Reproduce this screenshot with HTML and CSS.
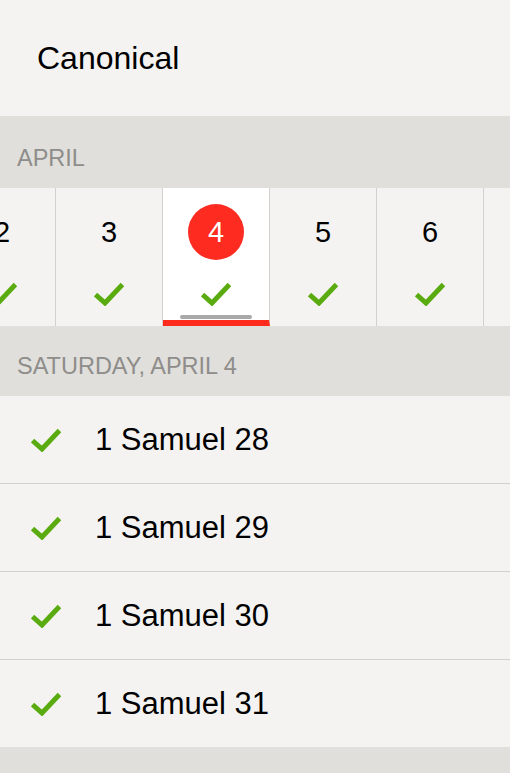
FILE: index.html
```html
<!DOCTYPE html>
<html lang="en">
<head>
    <meta charset="UTF-8">
    <meta name="viewport" content="width=device-width, initial-scale=1.0">
    <title>Canonical</title>
    <link rel="stylesheet" href="styles.css">
</head>
<body>
<div class="wrapper">
    <header class="topBar">
        <span class="planTitle">Canonical</span>
    </header>

    <div class="section section-month">APRIL</div>

    <div class="dayStrip">
        <div class="day">
            <span class="num">2</span>
            <svg class="check" viewBox="0 0 30 24"><polyline points="1.5,12.5 11,21 28.5,2.5"/></svg>
        </div>
        <div class="day">
            <span class="num">3</span>
            <svg class="check" viewBox="0 0 30 24"><polyline points="1.5,12.5 11,21 28.5,2.5"/></svg>
        </div>
        <div class="day current">
            <span class="num">4</span>
            <svg class="check" viewBox="0 0 30 24"><polyline points="1.5,12.5 11,21 28.5,2.5"/></svg>
            <span class="grip"></span>
        </div>
        <div class="day">
            <span class="num">5</span>
            <svg class="check" viewBox="0 0 30 24"><polyline points="1.5,12.5 11,21 28.5,2.5"/></svg>
        </div>
        <div class="day">
            <span class="num">6</span>
            <svg class="check" viewBox="0 0 30 24"><polyline points="1.5,12.5 11,21 28.5,2.5"/></svg>
        </div>
        <!-- 下一天，只露出一条边 -->
        <div class="day"></div>
    </div>

    <div class="section section-day">SATURDAY, APRIL 4</div>

    <ul class="readingList">
        <li>
            <svg class="check" viewBox="0 0 30 24"><polyline points="1.5,12.5 11,21 28.5,2.5"/></svg>
            <span class="chapter">1 Samuel 28</span>
        </li>
        <li>
            <svg class="check" viewBox="0 0 30 24"><polyline points="1.5,12.5 11,21 28.5,2.5"/></svg>
            <span class="chapter">1 Samuel 29</span>
        </li>
        <li>
            <svg class="check" viewBox="0 0 30 24"><polyline points="1.5,12.5 11,21 28.5,2.5"/></svg>
            <span class="chapter">1 Samuel 30</span>
        </li>
        <li>
            <svg class="check" viewBox="0 0 30 24"><polyline points="1.5,12.5 11,21 28.5,2.5"/></svg>
            <span class="chapter">1 Samuel 31</span>
        </li>
    </ul>
</div>
</body>
</html>
```

FILE: styles.css
```css
html, body{
    margin: 0;
    padding: 0;
    background-color: #e0dfdc;
}
body{
    font-family: "Liberation Sans", Arial, Helvetica, sans-serif;
    color: #000;
}
.wrapper{
    width: 510px;
    height: 773px;
    overflow: hidden;
    background-color: #e0dfdc;
}
.topBar{
    box-sizing: border-box;
    height: 116px;
    padding: 40px 0 0 37px;
    background-color: #f4f3f1;
}
.planTitle{
    display: block;
    font-size: 32px;
    line-height: 36px;
}
/*灰色分组标题*/
.section{
    box-sizing: border-box;
    padding-left: 17px;
    font-size: 23.5px;
    line-height: 24px;
    color: #8e8d8a;
    background-color: #e0dfdc;
}
.section-month{
    height: 72px;
    padding-top: 30px;
}
.section-day{
    height: 70px;
    padding-top: 28px;
}
/*日期横条*/
.dayStrip{
    display: flex;
    height: 138px;
    margin-left: -51px;
    background-color: #f4f3f1;
}
.day{
    box-sizing: border-box;
    flex: 0 0 107px;
    height: 138px;
    padding-top: 16px;
    display: flex;
    flex-direction: column;
    align-items: center;
    border-right: 1px solid #d2d1cf;
}
.day .num{
    width: 56px;
    height: 56px;
    line-height: 56px;
    text-align: center;
    font-size: 29px;
    border-radius: 50%;
}
.day .check{
    margin-top: 22px;
}
.current{
    background-color: #fff;
    border-bottom: 6px solid #fe2a1c;
}
.current .num{
    background-color: #fe2c20;
    color: #fff;
}
.grip{
    width: 72px;
    height: 4px;
    margin-top: 9px;
    border-radius: 2px;
    background-color: #a9a9a9;
}
/*对勾*/
.check{
    display: block;
    width: 30px;
    height: 24px;
    flex: none;
}
.check polyline{
    fill: none;
    stroke: #5aab10;
    stroke-width: 5;
}
/*章节列表*/
.readingList{
    list-style: none;
    margin: 0;
    padding: 0;
}
.readingList li{
    display: flex;
    align-items: center;
    height: 87px;
    padding-left: 31px;
    background-color: #f4f3f1;
    border-bottom: 1px solid #d1d0ce;
}
.readingList li:last-child{
    border-bottom: none;
}
.chapter{
    margin-left: 34px;
    font-size: 31px;
    line-height: 36px;
}
```
